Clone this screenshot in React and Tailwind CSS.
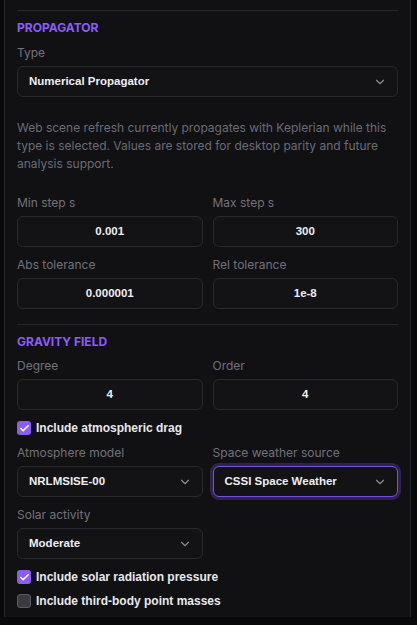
import React from "react";
import { ChevronDown, Check } from "lucide-react";

function Label({ children, className = "" }) {
  return (
    <div className={"font-['Inter',sans-serif] text-[12px] leading-[18px] text-[#71717a] " + className}>
      {children}
    </div>
  );
}

function Select({ value, focused = false, className = "" }) {
  return (
    <div
      className={
        "mt-1 flex h-[31px] items-center justify-between rounded-md border bg-[#131316] pl-[11px] pr-[10px] " +
        (focused
          ? "border-[#7654d9] ring-[3px] ring-[#8b5cf6]/25 "
          : "border-[#28282e] ") +
        className
      }
    >
      <span className="font-['Liberation_Sans',Arial,sans-serif] text-[11.5px] font-bold text-[#eeeef2]">
        {value}
      </span>
      <ChevronDown size={14} strokeWidth={2} className="text-[#8a8a93]" />
    </div>
  );
}

function NumInput({ value }) {
  return (
    <div className="mt-1 flex h-[31px] items-center justify-center rounded-md border border-[#28282e] bg-[#131316] font-['Liberation_Sans',Arial,sans-serif] text-[11.5px] font-bold text-[#eeeef2]">
      {value}
    </div>
  );
}

function Field({ label, children }) {
  return (
    <div>
      <Label>{label}</Label>
      {children}
    </div>
  );
}

function CheckRow({ checked, label, className = "" }) {
  return (
    <div className={"flex h-[18px] items-center gap-[5px] " + className}>
      {checked ? (
        <div className="flex h-[14px] w-[14px] items-center justify-center rounded-[3px] bg-[#8b5cf6]">
          <Check size={11} strokeWidth={3.5} className="text-white" />
        </div>
      ) : (
        <div className="h-[14px] w-[14px] rounded-[3px] border border-[#5a5a62] bg-[#3a3a40]" />
      )}
      <span className="font-['Liberation_Sans',Arial,sans-serif] text-[12px] font-bold text-[#e8e8ec]">
        {label}
      </span>
    </div>
  );
}

function Heading({ children }) {
  return (
    <div className="mt-[9px] text-[12px] font-bold leading-4 text-[#8b5cf6]">
      {children}
    </div>
  );
}

export default function App() {
  return (
    <div className="h-[625px] w-full overflow-hidden bg-[#09090b] font-['Inter',sans-serif]">
      <div className="ml-[4px] h-[617px] w-[407px] overflow-hidden border-x border-[#26262b] bg-[#111114] px-3 pt-[10px]">
        <div className="border-t border-[#26262b]" />
        <Heading>PROPAGATOR</Heading>
        <Label className="mt-2">Type</Label>
        <Select value="Numerical Propagator" />
        <p className="mt-[22px] text-[12px] leading-[18px] text-[#6b6b73]">
          Web scene refresh currently propagates with Keplerian while this
          type is selected. Values are stored for desktop parity and future
          analysis support.
        </p>
        <div className="mt-[21px] grid grid-cols-2 gap-x-[10px] gap-y-[9px]">
          <Field label="Min step s">
            <NumInput value="0.001" />
          </Field>
          <Field label="Max step s">
            <NumInput value="300" />
          </Field>
          <Field label="Abs tolerance">
            <NumInput value="0.000001" />
          </Field>
          <Field label="Rel tolerance">
            <NumInput value="1e-8" />
          </Field>
        </div>
        <div className="mt-[15px] border-t border-[#26262b]" />
        <Heading>GRAVITY FIELD</Heading>
        <div className="mt-[7px] grid grid-cols-2 gap-x-[10px]">
          <Field label="Degree">
            <NumInput value="4" />
          </Field>
          <Field label="Order">
            <NumInput value="4" />
          </Field>
        </div>
        <CheckRow checked label="Include atmospheric drag" className="mt-[9px]" />
        <div className="mt-[7px] grid grid-cols-2 gap-x-[10px]">
          <Field label="Atmosphere model">
            <Select value="NRLMSISE-00" />
          </Field>
          <Field label="Space weather source">
            <Select value="CSSI Space Weather" focused />
          </Field>
        </div>
        <div className="mt-[9px] grid grid-cols-2 gap-x-[10px]">
          <Field label="Solar activity">
            <Select value="Moderate" />
          </Field>
        </div>
        <CheckRow checked label="Include solar radiation pressure" className="mt-[9px]" />
        <CheckRow label="Include third-body point masses" className="mt-[6px]" />
      </div>
    </div>
  );
}
